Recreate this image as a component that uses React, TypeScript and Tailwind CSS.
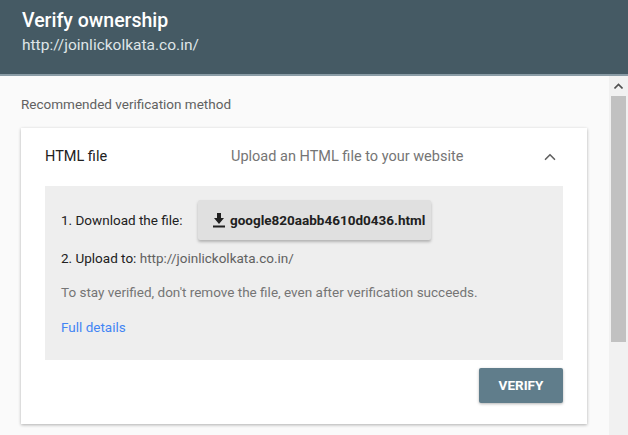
import { ChevronUp } from 'lucide-react';

const DownloadIcon = () => (
  <svg width="14" height="16" viewBox="0 0 14 16" className="shrink-0">
    <path d="M5 1h4v5h3l-5 6-5-6h3z" fill="#212121" />
    <rect x="1" y="13.5" width="12" height="2" fill="#212121" />
  </svg>
);

export default function App() {
  return (
    <div className="flex h-[435px] w-[628px] flex-col overflow-hidden bg-[#fafafa]" style={{ fontFamily: 'Roboto, "Liberation Sans", sans-serif' }}>
      <header className="h-[76px] shrink-0 border-b-2 border-[#8a9ca6] bg-[#455a64] px-[22px] pt-[9px]">
        <h1 className="text-[19.5px] font-medium leading-[24px] text-white">Verify ownership</h1>
        <p className="mt-[3px] text-[15.5px] leading-[18px] text-[#dfe5e8]">http://joinlickolkata.co.in/</p>
      </header>

      <div className="flex min-h-0 flex-1">
        <main className="min-w-0 flex-1 pl-[21px] pr-[22px]">
          <p className="pt-[20px] text-[13.5px] leading-[16px] text-[#616161]">Recommended verification method</p>

          <section className="mt-[16px] bg-white pb-[21px] shadow-[0_1px_3px_rgba(0,0,0,0.3)]">
            <div className="flex h-[58px] items-center pl-[24px] pr-[28px] text-[14.5px]">
              <span className="w-[186px] text-[#212121]">HTML file</span>
              <span className="flex-1 text-[#757575]">Upload an HTML file to your website</span>
              <ChevronUp size={18} strokeWidth={2.2} className="text-[#616161]" />
            </div>

            <div className="mx-[24px] bg-[#eeeeee] px-[16px] pb-[23px] pt-[14px] text-[13.5px]">
              <div className="flex items-center">
                <span className="w-[137px] text-[#212121]">1. Download the file:</span>
                <button type="button" className="flex h-[40px] w-[233px] items-center gap-[4px] rounded-[2px] bg-[#e0e0e0] pl-[14px] text-[13.5px] font-bold text-[#212121] shadow-[0_2px_3px_rgba(0,0,0,0.25)]">
                  <DownloadIcon />
                  google820aabb4610d0436.html
                </button>
              </div>
              <p className="mt-[8px] text-[#212121]">
                2. Upload to: <span className="text-[#616161]">http://joinlickolkata.co.in/</span>
              </p>
              <p className="mt-[14px] text-[#757575]">To stay verified, don't remove the file, even after verification succeeds.</p>
              <a className="mt-[14px] block text-[#4285f4]">Full details</a>
            </div>

            <div className="mr-[24px] mt-[8px] flex justify-end">
              <button type="button" className="h-[35px] w-[84px] rounded-[2px] bg-[#607d8b] text-[13.5px] font-bold text-white shadow-[0_1px_3px_rgba(0,0,0,0.3)]">VERIFY</button>
            </div>
          </section>
        </main>

        <div className="flex w-[19px] shrink-0 flex-col bg-[#f1f1f1]">
          <div className="flex h-[20px] items-center justify-center">
            <svg width="9" height="6" viewBox="0 0 9 6">
              <path d="M0.5 5.5L4.5 1.5L8.5 5.5" stroke="#505050" strokeWidth="1.6" fill="none" />
            </svg>
          </div>
          <div className="mx-[2px] h-[246px] bg-[#c1c1c1]" />
        </div>
      </div>
    </div>
  );
}
